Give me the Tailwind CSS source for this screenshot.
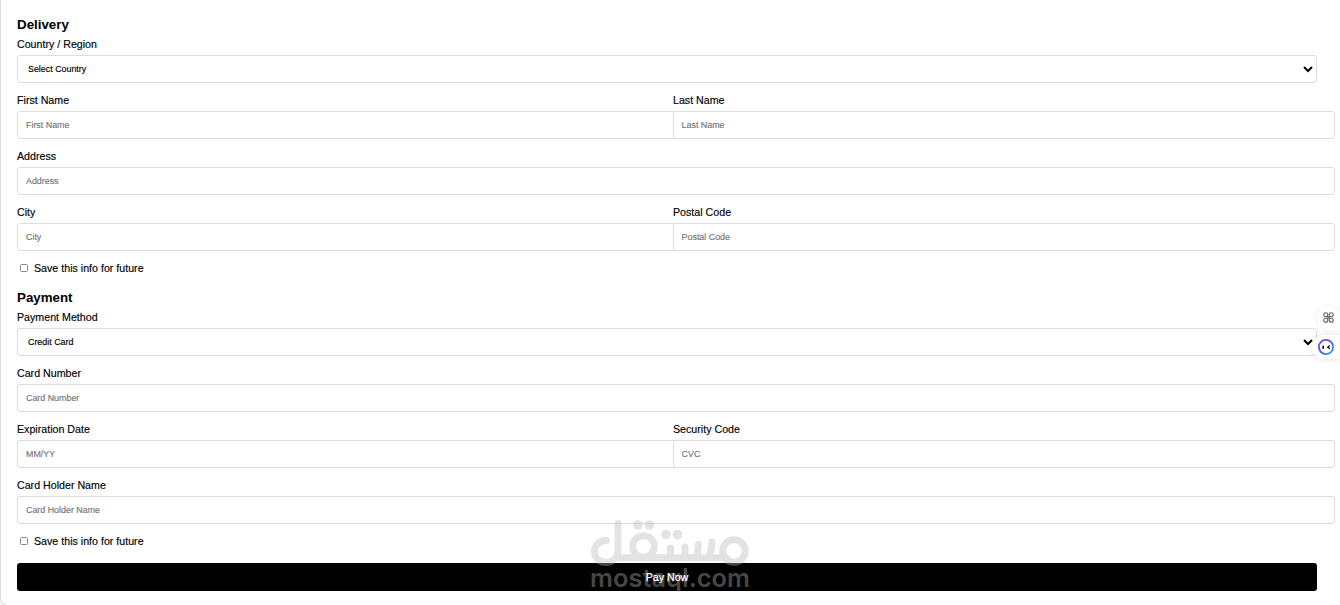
<!DOCTYPE html>
<html lang="en">
<head>
  <meta charset="UTF-8" />
  <meta name="viewport" content="width=device-width, initial-scale=1.0"/>
  <title>Checkout</title>
  <script src="https://cdn.jsdelivr.net/npm/@tailwindcss/browser@4"></script>
</head>
<body class="relative h-[605px] overflow-hidden bg-[#f8f8f8] font-['Liberation_Sans',Arial,sans-serif] text-[10.67px] text-black">

  <!-- CHECKOUT FORM -->
  <form class="h-[606px] w-[1350px] rounded-bl-lg border-b border-l border-[#ddd] bg-white pt-[14px] pl-4 [-webkit-text-stroke:0.15px]">

    <!-- DELIVERY -->
    <h2 class="h-5 text-[13.33px] leading-[22px] font-bold [-webkit-text-stroke:0]">Delivery</h2>
    <div class="flex flex-col gap-[7px]">
      <div class="w-[1300px]">
        <label for="country" class="block h-[21px] leading-5">Country / Region</label>
        <div class="relative">
          <select id="country" class="block h-7 w-full appearance-none rounded-[3px] border border-[#ddd] bg-white px-[10px] pt-px text-[8.9px]">
            <option>Select Country</option>
          </select>
          <svg class="pointer-events-none absolute top-[11px] right-1 h-[7px] w-[10px]" viewBox="0 0 10 7" fill="none" stroke="#000" stroke-width="2"><path d="M1 1l4 4 4-4"/></svg>
        </div>
      </div>
      <div class="flex">
        <div class="w-[656px]">
          <label for="first" class="block h-[21px] leading-5">First Name</label>
          <input id="first" type="text" placeholder="First Name" class="block h-7 w-[662px] rounded-[3px] border border-[#ddd] bg-white px-2 text-[8.9px] placeholder:text-[#757575]">
        </div>
        <div class="relative w-[662px]">
          <label for="last" class="block h-[21px] leading-5">Last Name</label>
          <input id="last" type="text" placeholder="Last Name" class="block h-7 w-full rounded-[3px] border border-[#ddd] bg-white px-[7.6px] text-[8.9px] placeholder:text-[#757575]">
        </div>
      </div>
      <div>
        <label for="address" class="block h-[21px] leading-5">Address</label>
        <input id="address" type="text" placeholder="Address" class="block h-7 w-[1318px] rounded-[3px] border border-[#ddd] bg-white px-2 text-[8.9px] placeholder:text-[#757575]">
      </div>
      <div class="flex">
        <div class="w-[656px]">
          <label for="city" class="block h-[21px] leading-5">City</label>
          <input id="city" type="text" placeholder="City" class="block h-7 w-[662px] rounded-[3px] border border-[#ddd] bg-white px-2 text-[8.9px] placeholder:text-[#757575]">
        </div>
        <div class="relative w-[662px]">
          <label for="postal" class="block h-[21px] leading-5">Postal Code</label>
          <input id="postal" type="text" placeholder="Postal Code" class="block h-7 w-full rounded-[3px] border border-[#ddd] bg-white px-[7.6px] text-[8.9px] placeholder:text-[#757575]">
        </div>
      </div>
      <label class="flex h-5 items-center gap-[6px] pl-[3px] leading-5">
        <input type="checkbox" class="h-2 w-2 appearance-none rounded-[1.5px] border border-[#8a8a8a] bg-white">
        Save this info for future
      </label>
    </div>

    <!-- PAYMENT -->
    <h2 class="mt-[9px] h-5 text-[13.33px] leading-[22px] font-bold [-webkit-text-stroke:0]">Payment</h2>
    <div class="flex flex-col gap-[7px]">
      <div class="w-[1300px]">
        <label for="method" class="block h-[21px] leading-5">Payment Method</label>
        <div class="relative">
          <select id="method" class="block h-7 w-full appearance-none rounded-[3px] border border-[#ddd] bg-white px-[10px] pt-px text-[8.9px]">
            <option>Credit Card</option>
          </select>
          <svg class="pointer-events-none absolute top-[11px] right-1 h-[7px] w-[10px]" viewBox="0 0 10 7" fill="none" stroke="#000" stroke-width="2"><path d="M1 1l4 4 4-4"/></svg>
        </div>
      </div>
      <div>
        <label for="card" class="block h-[21px] leading-5">Card Number</label>
        <input id="card" type="text" placeholder="Card Number" class="block h-7 w-[1318px] rounded-[3px] border border-[#ddd] bg-white px-2 text-[8.9px] placeholder:text-[#757575]">
      </div>
      <div class="flex">
        <div class="w-[656px]">
          <label for="exp" class="block h-[21px] leading-5">Expiration Date</label>
          <input id="exp" type="text" placeholder="MM/YY" class="block h-7 w-[662px] rounded-[3px] border border-[#ddd] bg-white px-2 text-[8.9px] placeholder:text-[#757575]">
        </div>
        <div class="relative w-[662px]">
          <label for="cvc" class="block h-[21px] leading-5">Security Code</label>
          <input id="cvc" type="text" placeholder="CVC" class="block h-7 w-full rounded-[3px] border border-[#ddd] bg-white px-[7.6px] text-[8.9px] placeholder:text-[#757575]">
        </div>
      </div>
      <div>
        <label for="holder" class="block h-[21px] leading-5">Card Holder Name</label>
        <input id="holder" type="text" placeholder="Card Holder Name" class="block h-7 w-[1318px] rounded-[3px] border border-[#ddd] bg-white px-2 text-[8.9px] placeholder:text-[#757575]">
      </div>
      <label class="flex h-5 items-center gap-[6px] pl-[3px] leading-5">
        <input type="checkbox" class="h-2 w-2 appearance-none rounded-[1.5px] border border-[#8a8a8a] bg-white">
        Save this info for future
      </label>
    </div>
    <button type="button" class="mt-3 block h-7 w-[1300px] rounded-[3px] bg-black text-white [-webkit-text-stroke:0.25px]"><span class="relative z-10">Pay Now</span></button>
  </form>

  <!-- WATERMARK -->
  <svg class="pointer-events-none absolute top-[515px] left-[585px] h-[80px] w-[170px] opacity-38" viewBox="0 0 170 80" fill="none" stroke="#b8b8b8" stroke-width="7" stroke-linecap="round" stroke-linejoin="round">
    <path d="M21.500 25.500C14.500 25.500 9.500 30.500 9.500 36.500C9.500 43 14.500 47.500 21 47.500C25 47.500 28.500 45.500 31 42.700H141"/>
    <path d="M33 8.500V34C33 37.500 32.500 40.500 31 42.700"/>
    <circle cx="58.500" cy="31.500" r="10.800"/>
    <path d="M85.500 33V42M100 32V42M113.500 29.500L112 42M127 27C126.500 34 126 39 123 42"/>
    <circle cx="149" cy="36" r="11.300"/>
    <g fill="#b8b8b8" stroke="none">
      <circle cx="52.800" cy="10" r="4.800"/>
      <circle cx="64.500" cy="10" r="4.800"/>
      <circle cx="81" cy="19.500" r="4.800"/>
      <circle cx="92.500" cy="19.500" r="4.800"/>
      <text x="5" y="72" font-family="Inter, sans-serif" font-size="25" font-weight="600" textLength="160" lengthAdjust="spacingAndGlyphs">mostaql.com</text>
    </g>
  </svg>

  <!-- FLOATING WIDGETS -->
  <div class="absolute top-[306px] left-[1317px] flex h-6 w-6 items-center justify-center rounded-full bg-white shadow-[0_0_5px_rgba(0,0,0,0.07)]">
    <svg class="-mt-px -ml-px h-[11px] w-[11px]" viewBox="0 0 11 11" fill="none" stroke="#6b6262" stroke-width="1.100">
      <circle cx="2.800" cy="2.800" r="2"/>
      <circle cx="8.200" cy="2.800" r="2"/>
      <circle cx="2.800" cy="8.200" r="2"/>
      <circle cx="8.200" cy="8.200" r="2"/>
      <path d="M4 4l3 3M7 4L4 7"/>
    </svg>
  </div>
  <div class="absolute top-[335px] left-[1312px] flex h-6 w-8 items-center rounded-l-full bg-white pl-[6px] shadow-[0_0_6px_rgba(0,0,0,0.12)]">
    <svg class="h-4 w-4" viewBox="0 0 16 16" fill="none">
      <defs>
        <linearGradient id="ring" x1="0" y1="0" x2="1" y2="1">
          <stop offset="0" stop-color="#7a4cf0"/>
          <stop offset="0.550" stop-color="#4a55e8"/>
          <stop offset="1" stop-color="#25b4f5"/>
        </linearGradient>
      </defs>
      <circle cx="8" cy="8" r="7.100" stroke="url(#ring)" stroke-width="1.800"/>
      <path d="M5.200 6.600V9.800" stroke="#111" stroke-width="1.700"/>
      <path d="M11.800 6.500L9.800 8.200L11.800 9.800" stroke="#111" stroke-width="1.400"/>
    </svg>
  </div>
</body>
</html>
